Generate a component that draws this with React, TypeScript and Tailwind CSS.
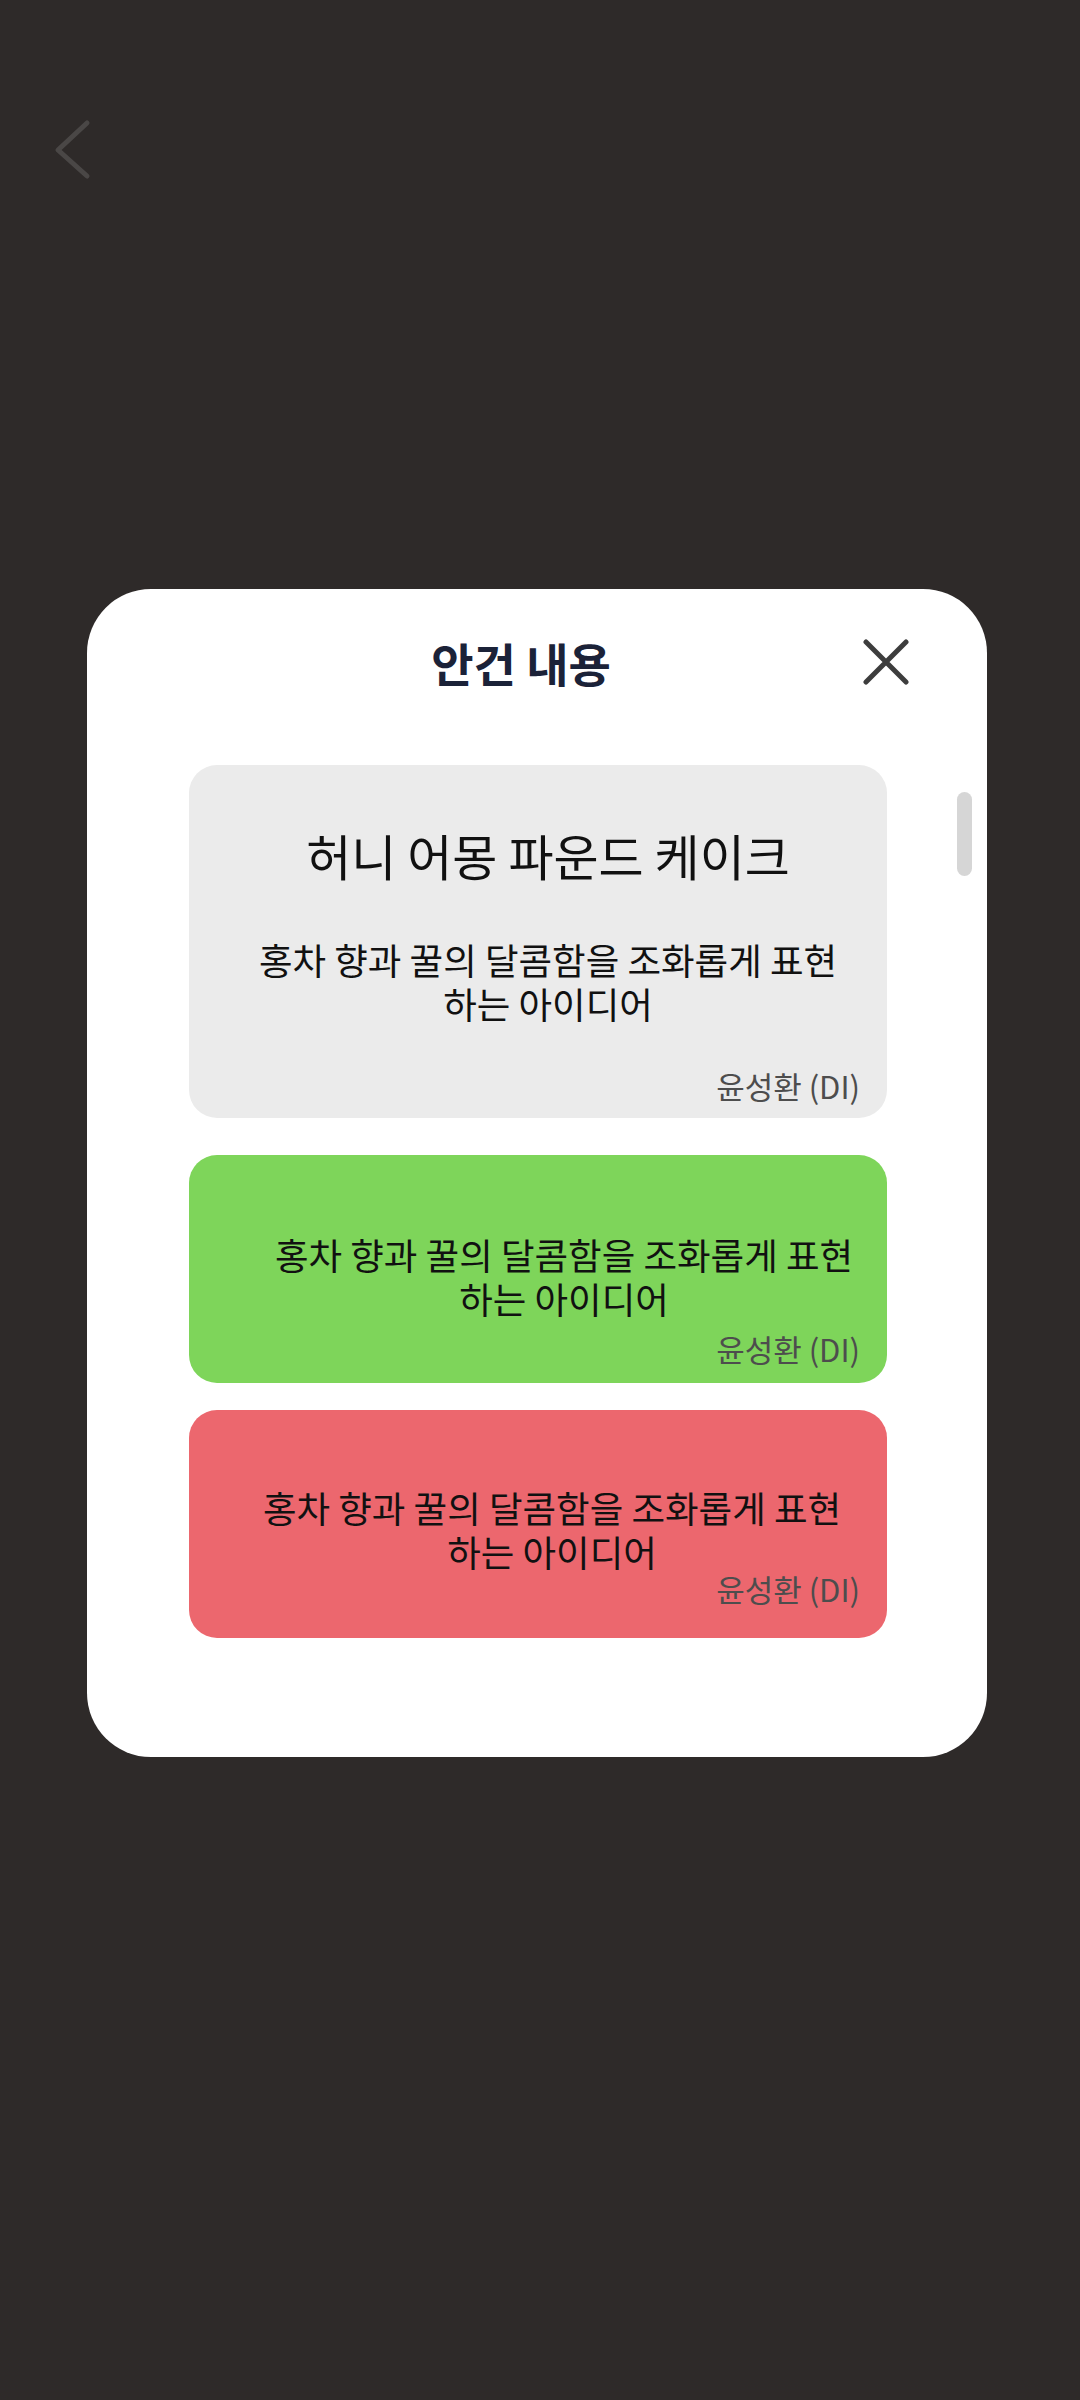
import React from "react";

const font = { fontFamily: '"Noto Sans CJK KR", "Noto Sans", sans-serif' };

type Idea = {
  title?: string;
  lines: string[];
  author: string;
  bg: string;
  pad: string;
  descGap: string;
  authorGap: string;
};

const ideas: Idea[] = [
  {
    title: "허니 어몽 파운드 케이크",
    lines: ["홍차 향과 꿀의 달콤함을 조화롭게 표현", "하는 아이디어"],
    author: "윤성환 (DI)",
    bg: "bg-[#ebebeb]",
    pad: "pt-[62px] pb-[15px] pl-[47px] pr-[27px]",
    descGap: "mt-[55px]",
    authorGap: "mt-[43px]"
  },
  {
    lines: ["홍차 향과 꿀의 달콤함을 조화롭게 표현", "하는 아이디어"],
    author: "윤성환 (DI)",
    bg: "bg-[#7ed55a]",
    pad: "pt-[78px] pb-[17px] pl-[79px] pr-[27px]",
    descGap: "mt-0",
    authorGap: "mt-[11px]"
  },
  {
    lines: ["홍차 향과 꿀의 달콤함을 조화롭게 표현", "하는 아이디어"],
    author: "윤성환 (DI)",
    bg: "bg-[#ec676e]",
    pad: "pt-[76px] pb-[32px] pl-[55px] pr-[27px]",
    descGap: "mt-0",
    authorGap: "-mt-[2px]"
  }
];

function IdeaCard({ idea }: { idea: Idea }) {
  return (
    <div className={`rounded-[28px] ${idea.bg} ${idea.pad}`}>
      {idea.title && (
        <p className="whitespace-nowrap text-center text-[49px] leading-[56px] text-[#111]">{idea.title}</p>
      )}
      <p className={`${idea.descGap} whitespace-nowrap text-center text-[36.5px] leading-[44px] text-[#111]`}>
        {idea.lines[0]}
        <br />
        {idea.lines[1]}
      </p>
      <p className={`${idea.authorGap} text-right text-[31px] leading-[34px] text-[#4d4d4d]`}>{idea.author}</p>
    </div>
  );
}

export default function App() {
  return (
    <main className="min-h-[2400px] w-[1080px] bg-[#2e2a29]" style={font}>
      <div className="pl-[50px] pt-[115px]">
        <svg width="45" height="70" viewBox="0 0 45 70" fill="none">
          <path d="M37 8 L8 35 L37 61" stroke="#4a4746" strokeWidth="5" strokeLinecap="round" strokeLinejoin="round" />
        </svg>
      </div>

      <section className="ml-[87px] mt-[404px] w-[900px] rounded-[64px] bg-white pt-[47px] pb-[119px]">
        <header className="flex items-center pl-[92px] pr-[78px]">
          <h2 className="flex-1 text-center text-[46px] font-bold leading-[52px] text-[#1b2238]">안건 내용</h2>
          <button type="button" className="h-[46px] w-[46px]">
            <svg width="46" height="46" viewBox="0 0 46 46" fill="none">
              <path d="M3 3 L43 43 M43 3 L3 43" stroke="#3d3d3d" strokeWidth="5" strokeLinecap="round" />
            </svg>
          </button>
        </header>

        <div className="mt-[77px] flex items-start pl-[102px]">
          <div className="flex w-[698px] flex-col">
            <IdeaCard idea={ideas[0]} />
            <div className="mt-[37px]">
              <IdeaCard idea={ideas[1]} />
            </div>
            <div className="mt-[27px]">
              <IdeaCard idea={ideas[2]} />
            </div>
          </div>
          <div className="ml-[70px] mt-[27px] h-[84px] w-[15px] rounded-full bg-[#d6d6d6]" />
        </div>
      </section>
    </main>
  );
}
